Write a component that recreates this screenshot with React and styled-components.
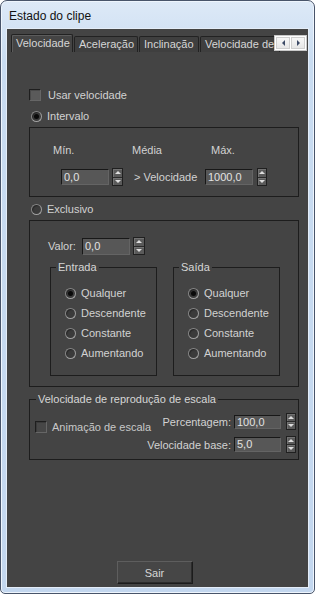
import React from "react";
import styled, { createGlobalStyle, css } from "styled-components";

const Global = createGlobalStyle`
  html, body { margin: 0; padding: 0; background: #ffffff; }
  body { font-family: "Liberation Sans", Arial, sans-serif; font-size: 11px; }
  * { box-sizing: border-box; }
`;

const Window = styled.div`
  width: 315px;
  height: 594px;
  border: 1px solid #48546a;
  border-radius: 7px 7px 5px 5px;
  background: linear-gradient(#dde9f7, #c9dcf1 60px, #c3d7ef);
  padding: 0 6px 6px;
  display: flex;
  flex-direction: column;
  box-shadow: inset 0 0 0 1px #eef5fd;
`;

const TitleBar = styled.div`
  height: 28px;
  display: flex;
  align-items: center;
  padding-left: 2px;
  padding-top: 2px;
  font-size: 12px;
  color: #111;
`;

const Client = styled.div`
  width: 301px;
  height: 558px;
  background: #444444;
  display: flex;
  flex-direction: column;
  box-shadow: 0 0 0 1px #e4edf8;
`;

const TabRow = styled.div`
  position: relative;
  display: flex;
  align-items: flex-end;
  height: 18px;
  margin: 5px 0 0 4px;
  overflow: hidden;
  white-space: nowrap;
`;

const Tab = styled.div`
  flex: none;
  width: ${(p) => p.$w}px;
  height: ${(p) => (p.$active ? 18 : 16)}px;
  margin-right: 1px;
  border: 1px solid #222;
  border-bottom: none;
  border-radius: 2px 2px 0 0;
  background: ${(p) => (p.$active ? "#444" : "#3f3f3f")};
  color: #d6d6d6;
  padding-left: 4px;
  line-height: ${(p) => (p.$active ? 17 : 15)}px;
  box-shadow: ${(p) => (p.$active ? "inset 1px 1px 0 #5c5c5c" : "none")};
`;

const Scroller = styled.div`
  position: absolute;
  right: 1px;
  top: 1px;
  width: 33px;
  height: 16px;
  background: #ffffff;
  border: 1px solid #c9c9c9;
  display: flex;
  gap: 1px;
  padding: 1px;
`;

const ScrollBtn = styled.div`
  flex: 1;
  background: linear-gradient(#f7f7f7, #e6e6e6);
  border: 1px solid #cfcfcf;
  display: flex;
  align-items: center;
  justify-content: center;
  &::after {
    content: "";
    width: 0;
    height: 0;
    border-top: 3px solid transparent;
    border-bottom: 3px solid transparent;
    ${(p) =>
      p.$dir === "left"
        ? css`border-right: 3px solid #3c4a66;`
        : css`border-left: 3px solid #3c4a66;`}
  }
`;

const Page = styled.div`
  display: flex;
  flex-direction: column;
  margin: 0 4px;
  padding: 35px 0 0 18px;
  color: #d2d2d2;
`;

const OptionRow = styled.div`
  display: flex;
  align-items: center;
  white-space: nowrap;
  min-width: 0;
  flex: 0 1 auto;
  height: ${(p) => p.$h || 16}px;
  margin-top: ${(p) => p.$mt || 0}px;
  color: ${(p) => p.$color || "#d2d2d2"};
`;

const CheckBox = styled.span`
  flex: none;
  width: 12px;
  height: 12px;
  margin-right: ${(p) => p.$gap || 7}px;
  border: 1px solid #1e1e1e;
  border-right-color: #666;
  border-bottom-color: #666;
  background: ${(p) => (p.$dim ? "#474747" : "#5a5a5a")};
  box-shadow: inset 1px 1px 0 ${(p) => (p.$dim ? "#3a3a3a" : "#4a4a4a")};
`;

const Radio = styled.span`
  flex: none;
  position: relative;
  width: 11px;
  height: 11px;
  margin-left: ${(p) => p.$ml || 0}px;
  margin-right: 5px;
  border-radius: 50%;
  background: #3b3b3b;
  border: 1px solid #858585;
  border-right-color: #a0a0a0;
  border-bottom-color: #a0a0a0;
  box-shadow: inset 1px 1px 1px #262626;
  ${(p) =>
    p.$on &&
    css`
      &::after {
        content: "";
        position: absolute;
        left: 2px;
        top: 2px;
        width: 5px;
        height: 5px;
        border-radius: 50%;
        background: #0a0a0a;
      }
    `}
`;

const Group = styled.div`
  position: relative;
  flex: none;
  width: ${(p) => p.$w || 270}px;
  height: ${(p) => p.$h}px;
  margin-top: ${(p) => p.$mt || 0}px;
  border: 1px solid #1d1d1d;
  padding-top: ${(p) => p.$pt || 0}px;
  padding-left: ${(p) => p.$pl || 0}px;
  display: flex;
  flex-direction: column;
`;

const Legend = styled.span`
  position: absolute;
  top: -7px;
  left: ${(p) => p.$left || 6}px;
  padding: 0 2px;
  line-height: 13px;
  background: #444;
  color: #d6d6d6;
  white-space: nowrap;
`;

const LabelRow = styled.div`
  display: flex;
  height: 13px;
  line-height: 13px;
  padding-left: ${(p) => p.$pl || 0}px;
`;

const ColLabel = styled.span`
  width: ${(p) => p.$w}px;
  flex: none;
`;

const FieldRow = styled.div`
  display: flex;
  align-items: center;
  height: ${(p) => p.$h || 18}px;
  margin-top: ${(p) => p.$mt || 0}px;
  padding-left: ${(p) => p.$pl || 0}px;
  justify-content: ${(p) => (p.$end ? "flex-end" : "flex-start")};
`;

const Edit = styled.div`
  flex: none;
  width: ${(p) => p.$w || 48}px;
  height: ${(p) => p.$h || 16}px;
  margin-left: ${(p) => p.$ml || 0}px;
  border: 1px solid #181818;
  border-right-color: #646464;
  border-bottom-color: #646464;
  background: #575757;
  color: #e2e2e2;
  padding-left: 2px;
  line-height: ${(p) => (p.$h || 16) - 2}px;
`;

const Spin = styled.div`
  flex: none;
  width: ${(p) => p.$w || 11}px;
  height: ${(p) => p.$h || 18}px;
  margin-left: ${(p) => p.$ml || 4}px;
  border: 1px solid #202020;
  background: #5a5a5a;
  display: flex;
  flex-direction: column;
`;

const SpinHalf = styled.div`
  flex: 1;
  display: flex;
  align-items: center;
  justify-content: center;
  box-shadow: inset 1px 1px 0 #727272;
  & + & { border-top: 1px solid #2a2a2a; }
  &::after {
    content: "";
    width: 0;
    height: 0;
    border-left: 3px solid transparent;
    border-right: 3px solid transparent;
    ${(p) =>
      p.$up
        ? css`border-bottom: 3px solid #dedede;`
        : css`border-top: 3px solid #dedede;`}
  }
`;

const Text = styled.span`
  flex: none;
  width: ${(p) => (p.$w ? `${p.$w}px` : "auto")};
  margin-left: ${(p) => p.$ml || 0}px;
  white-space: nowrap;
`;

const SubGroups = styled.div`
  display: flex;
  margin-top: 12px;
  margin-left: 20px;
  gap: 16px;
`;

const RadioList = styled.div`
  display: flex;
  flex-direction: column;
`;

const ScaleBody = styled.div`
  display: flex;
  width: 100%;
`;

const ScaleFields = styled.div`
  flex: none;
  margin-left: auto;
  margin-right: 2px;
  display: flex;
  flex-direction: column;
  gap: 6px;
`;

const Footer = styled.div`
  margin-top: auto;
  display: flex;
  justify-content: center;
  padding: 0 6px 3px 0;
`;

const Button = styled.div`
  width: 76px;
  height: 23px;
  border: 1px solid #1c1c1c;
  border-top-color: #5e5e5e;
  border-left-color: #5e5e5e;
  background: #464646;
  box-shadow: inset -1px -1px 0 #2c2c2c;
  color: #d6d6d6;
  display: flex;
  align-items: center;
  justify-content: center;
`;

const Spinner = ({ w, h, ml }) => (
  <Spin $w={w} $h={h} $ml={ml}>
    <SpinHalf $up />
    <SpinHalf />
  </Spin>
);

const options = ["Qualquer", "Descendente", "Constante", "Aumentando"];

const RadioGroup = ({ title }) => (
  <Group $w={107} $h={109} $pt={15} $pl={14}>
    <Legend $left={5}>{title}</Legend>
    <RadioList>
      {options.map((o, i) => (
        <OptionRow key={o} $h={20}>
          <Radio $on={i === 0} />
          {o}
        </OptionRow>
      ))}
    </RadioList>
  </Group>
);

export default function App() {
  return (
    <>
      <Global />
      <Window>
        <TitleBar>Estado do clipe</TitleBar>
        <Client>
          <TabRow>
            <Tab $active $w={62}>Velocidade</Tab>
            <Tab $w={64}>Aceleração</Tab>
            <Tab $w={60}>Inclinação</Tab>
            <Tab $w={80}>Velocidade de</Tab>
            <Scroller>
              <ScrollBtn $dir="left" />
              <ScrollBtn $dir="right" />
            </Scroller>
          </TabRow>
          <Page>
            <OptionRow>
              <CheckBox />
              Usar velocidade
            </OptionRow>
            <OptionRow $mt={5}>
              <Radio $on $ml={2} />
              Intervalo
            </OptionRow>
            <Group $mt={3} $h={70} $pt={16}>
              <LabelRow $pl={23}>
                <ColLabel $w={79}>Mín.</ColLabel>
                <ColLabel $w={79}>Média</ColLabel>
                <ColLabel $w={50}>Máx.</ColLabel>
              </LabelRow>
              <FieldRow $mt={11} $pl={31}>
                <Edit>0,0</Edit>
                <Spinner ml={3} />
                <Text $ml={11} $w={71}>&gt; Velocidade</Text>
                <Edit>1000,0</Edit>
                <Spinner ml={4} w={10} />
              </FieldRow>
            </Group>
            <OptionRow $mt={4}>
              <Radio $ml={2} />
              Exclusivo
            </OptionRow>
            <Group $mt={3} $h={167} $pt={16}>
              <FieldRow $h={18} $pl={18}>
                <Text $w={34}>Valor:</Text>
                <Edit $h={17}>0,0</Edit>
                <Spinner ml={3} w={12} />
              </FieldRow>
              <SubGroups>
                <RadioGroup title="Entrada" />
                <RadioGroup title="Saída" />
              </SubGroups>
            </Group>
            <Group $mt={12} $h={61} $pt={13} $pl={5}>
              <Legend $left={6}>Velocidade de reprodução de escala</Legend>
              <ScaleBody>
                <OptionRow $mt={6} $color="#c8c8c8">
                  <CheckBox $dim $gap={5} />
                  Animação de escala
                </OptionRow>
                <ScaleFields>
                  <FieldRow $h={17} $end>
                    <Text>Percentagem:</Text>
                    <Edit $w={47} $h={14} $ml={3}>100,0</Edit>
                    <Spinner ml={5} w={10} h={17} />
                  </FieldRow>
                  <FieldRow $h={17} $end>
                    <Text>Velocidade base:</Text>
                    <Edit $w={47} $h={15} $ml={3}>5,0</Edit>
                    <Spinner ml={5} w={10} h={17} />
                  </FieldRow>
                </ScaleFields>
              </ScaleBody>
            </Group>
          </Page>
          <Footer>
            <Button>Sair</Button>
          </Footer>
        </Client>
      </Window>
    </>
  );
}
